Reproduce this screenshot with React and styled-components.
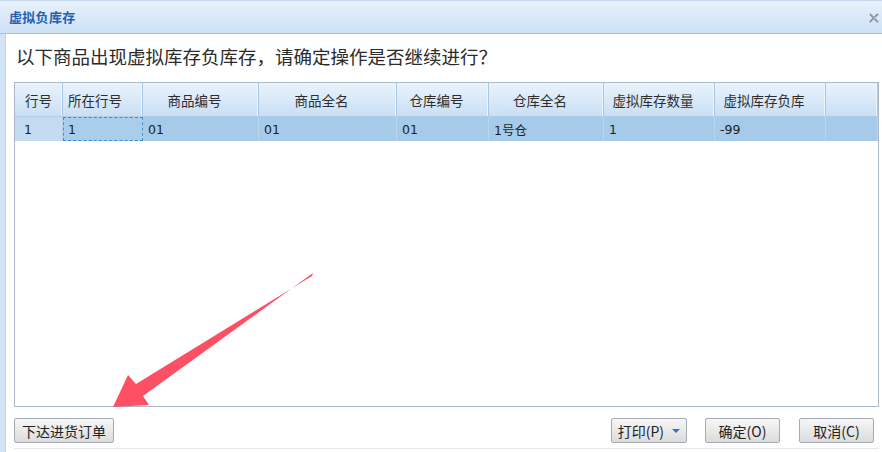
import React from "react";
import { styled, createGlobalStyle } from "styled-components";

const Global = createGlobalStyle`
  html, body { margin: 0; padding: 0; background: #ffffff; }
  * { box-sizing: border-box; }
`;

const Window = styled.div`
  position: relative;
  width: 882px;
  height: 452px;
  overflow: hidden;
  background: #ffffff;
  display: flex;
  flex-direction: column;
  font-family: "Noto Sans CJK SC", "Noto Sans", sans-serif;
`;

const TitleBar = styled.div`
  height: 34px;
  flex: none;
  display: flex;
  align-items: center;
  justify-content: space-between;
  padding: 0 0 1px 9px;
  border-top: 1px solid #c3d6ec;
  border-bottom: 1px solid #a3c0e2;
  background: linear-gradient(#e8f1fc, #cce0f6);
`;

const Title = styled.span`
  color: #2461b3;
  font-size: 13px;
  font-weight: bold;
  letter-spacing: 0.3px;
`;

const Close = styled.svg`
  margin-right: 1px;
  margin-top: 2px;
`;

const Body = styled.div`
  flex: 1;
  display: flex;
  min-height: 0;
`;

const Frame = styled.div`
  width: 6px;
  flex: none;
  background: #d3e4f7;
  border-right: 1px solid #bad2ee;
`;

const Content = styled.div`
  flex: 1;
  display: flex;
  flex-direction: column;
  padding: 0 3px 0 8px;
`;

const Message = styled.div`
  margin-top: 8px;
  padding-left: 2px;
  height: 28px;
  line-height: 28px;
  font-size: 18.5px;
  color: #2b2b2b;
`;

const Grid = styled.div`
  margin-top: 12px;
  height: 325px;
  border: 1px solid #aab8c8;
  display: flex;
  flex-direction: column;
  background: #ffffff;
`;

const cols = "48px 80px 116px 138px 92px 115px 111px 111px 1fr";

const HeadRow = styled.div`
  display: grid;
  grid-template-columns: ${cols};
  height: 34px;
  background: linear-gradient(#eaf3fc, #c9dff5);
  border-bottom: 1px solid #b4cde6;
`;

const HeadCell = styled.div`
  display: flex;
  align-items: center;
  justify-content: ${(p) => (p.$align === "left" ? "flex-start" : "center")};
  padding: ${(p) =>
    p.$align === "left" ? "0 0 0 5px" : p.$align === "mid" ? "0" : "0 12px 0 0"};
  font-size: 13.5px;
  color: #2e2e2e;
  border-right: 1px solid #a9c6e3;
  box-shadow: inset -1px 0 0 #eef5fd;
  white-space: nowrap;
`;

const DataRow = styled.div`
  display: grid;
  grid-template-columns: ${cols};
  height: 24px;
  background: #a6cae9;
`;

const Cell = styled.div`
  display: flex;
  align-items: center;
  padding-left: ${(p) => (p.$first ? "9px" : "5px")};
  font-family: "DejaVu Sans", "Noto Sans CJK SC", sans-serif;
  font-size: 12.5px;
  color: #1e1e1e;
  background: ${(p) => (p.$first ? "#c4dbf1" : p.$focus ? "#aacdeb" : "transparent")};
  border-right: 1px solid #bcd5ec;
  outline: ${(p) => (p.$focus ? "1px dashed #3f8fcf" : "none")};
  outline-offset: -1px;
`;

const Buttons = styled.div`
  margin-top: 11px;
  display: flex;
  align-items: center;
  padding-right: 5px;
`;

const Button = styled.button`
  height: 25px;
  min-width: 75px;
  padding: 0 ${(p) => p.$pad ?? 7}px;
  margin-left: ${(p) => p.$gap || 0}px;
  border: 1px solid #a3acb6;
  border-radius: 2px;
  background: linear-gradient(#f6f6f6, #dcdcdc);
  font-family: "Noto Sans CJK SC", sans-serif;
  font-size: 14px;
  color: #222;
  display: flex;
  align-items: center;
  justify-content: center;
  gap: 8px;
  cursor: pointer;
`;

const Spacer = styled.div`
  flex: 1;
`;

const Caret = styled.span`
  width: 0;
  height: 0;
  border-left: 4px solid transparent;
  border-right: 4px solid transparent;
  border-top: 4px solid #3b6fc2;
`;

const Footer = styled.div`
  margin-top: auto;
  height: 4px;
  border-top: 1px solid #e3e8ee;
`;

const Arrow = styled.svg`
  position: absolute;
  left: 0;
  top: 0;
  pointer-events: none;
`;

const headers = [
  ["行号", "mid"],
  ["所在行号", "left"],
  ["商品编号"],
  ["商品全名"],
  ["仓库编号"],
  ["仓库全名"],
  ["虚拟库存数量"],
  ["虚拟库存负库"],
  [""],
];

const row = ["1", "1", "01", "01", "01", "1号仓", "1", "-99", ""];

export default function App() {
  return (
    <Window>
      <Global />
      <TitleBar>
        <Title>虚拟负库存</Title>
        <Close width="12" height="10" viewBox="0 0 12 10">
          <path d="M1 1 L9 9 M9 1 L1 9" stroke="#8a8f96" strokeWidth="2" />
          <path d="M2 1 L10 9 M10 1 L2 9" stroke="#b9bec4" strokeWidth="1" />
        </Close>
      </TitleBar>
      <Body>
        <Frame />
        <Content>
          <Message>以下商品出现虚拟库存负库存，请确定操作是否继续进行？</Message>
          <Grid>
            <HeadRow>
              {headers.map(([h, align], i) => (
                <HeadCell key={i} $align={align}>
                  {h}
                </HeadCell>
              ))}
            </HeadRow>
            <DataRow>
              {row.map((v, i) => (
                <Cell key={i} $first={i === 0} $focus={i === 1}>
                  {v}
                </Cell>
              ))}
            </DataRow>
          </Grid>
          <Buttons>
            <Button>下达进货订单</Button>
            <Spacer />
            <Button $pad={6}>
              打印(P)
              <Caret />
            </Button>
            <Button $gap={18} $pad={4}>确定(O)</Button>
            <Button $gap={19} $pad={4}>取消(C)</Button>
          </Buttons>
          <Footer />
        </Content>
      </Body>
      <Arrow width="882" height="452" viewBox="0 0 882 452">
        <path
          d="M313 273 L312 276 L136 384 L128 375 L113 407 L149 405 L143 396 Z"
          fill="#fe5064"
          strokeLinejoin="round"
        />
      </Arrow>
    </Window>
  );
}
